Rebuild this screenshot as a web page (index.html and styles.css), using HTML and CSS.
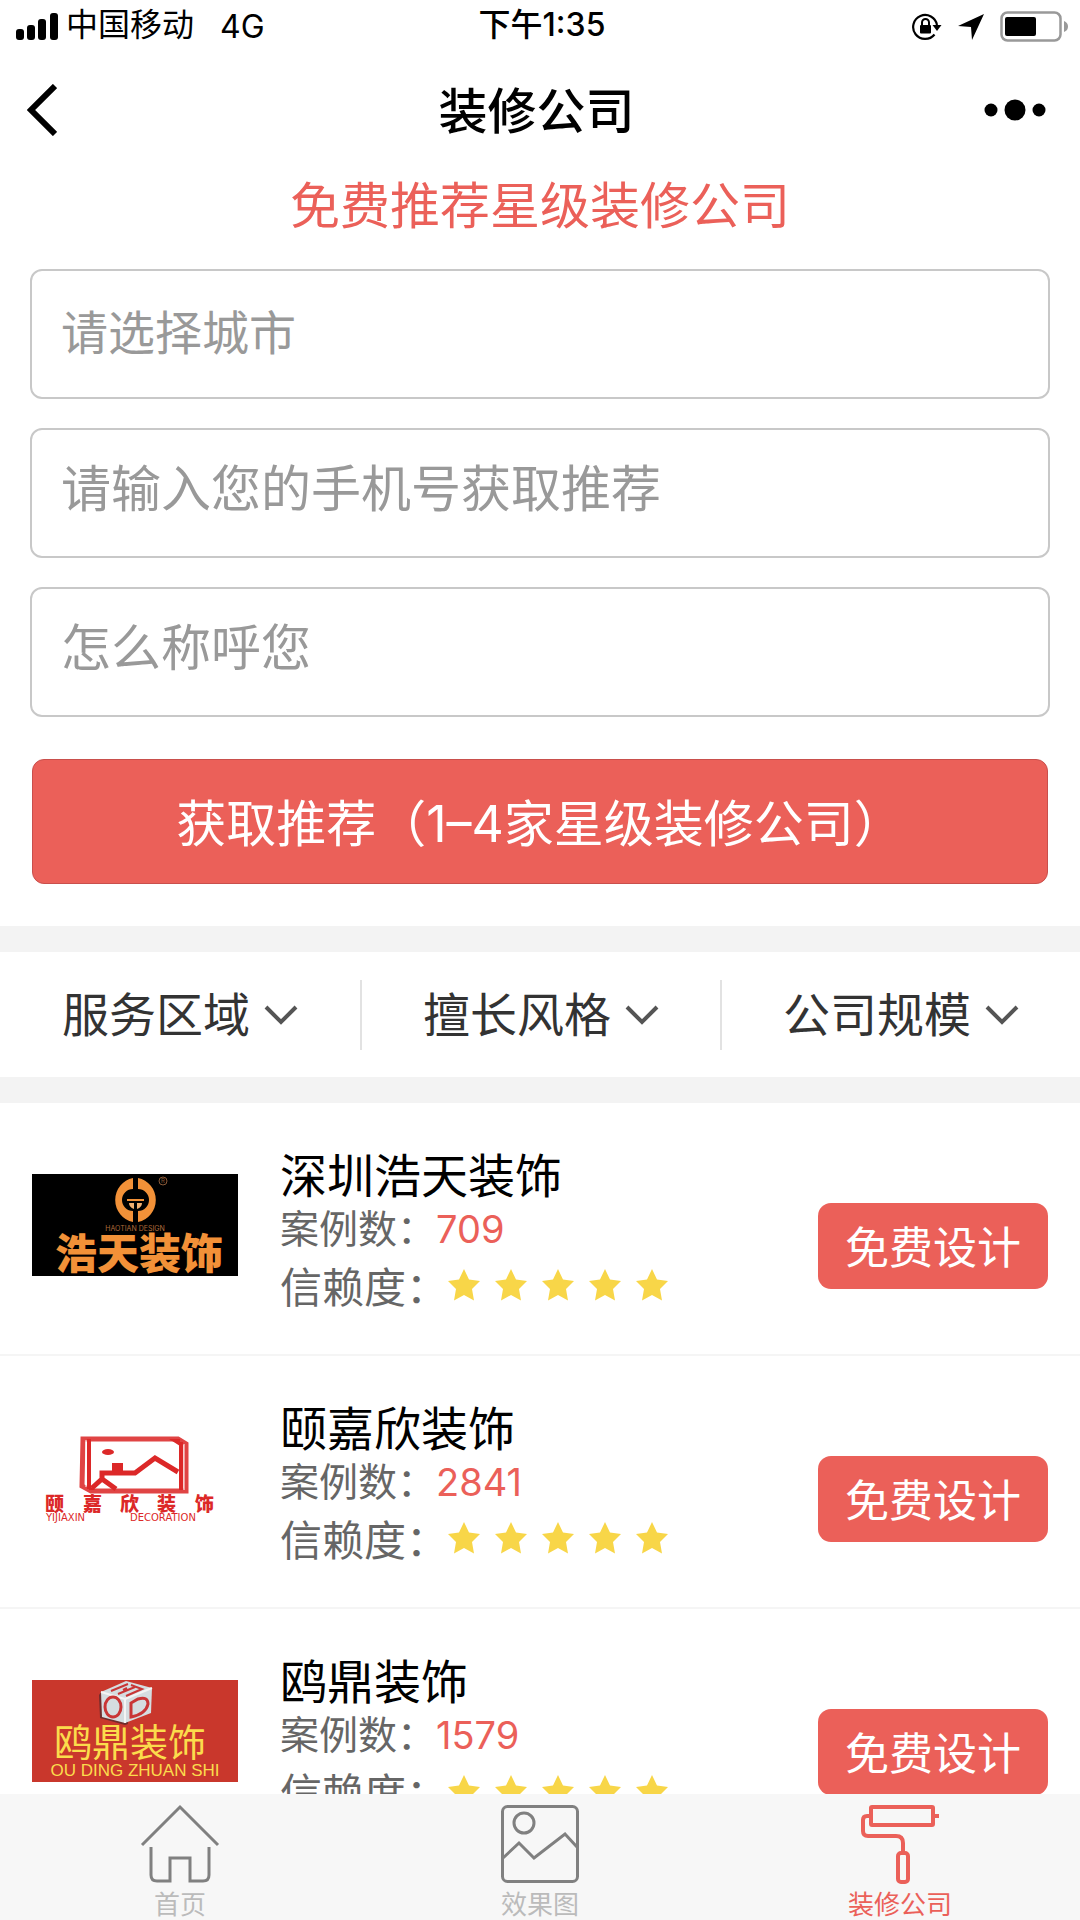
FILE: index.html
```html
<!DOCTYPE html>
<html lang="zh-CN">
<head>
<meta charset="utf-8">
<meta name="viewport" content="width=device-width">
<title>装修公司</title>
<link rel="stylesheet" href="styles.css">
</head>
<body>
<svg width="0" height="0" class="sprite" aria-hidden="true">
  <symbol id="star" viewBox="0 0 32 32"><path d="M16 0l5 10.500 11 1.500-8 8 2 11.500L16 26l-10 5.500L8 20 0 12l11-1.500z" fill="#f8d648"/></symbol>
  <symbol id="stars" viewBox="0 0 220 32">
    <use href="#star" x="0" width="32" height="32"/><use href="#star" x="47" width="32" height="32"/><use href="#star" x="94" width="32" height="32"/><use href="#star" x="141" width="32" height="32"/><use href="#star" x="188" width="32" height="32"/>
  </symbol>
  <symbol id="down" viewBox="0 0 34 20"><path d="M2 2l15 15L32 2" fill="none" stroke="#555" stroke-width="4"/></symbol>
</svg>

<div class="app">
  <div class="status">
    <div class="status-left">
      <svg width="42" height="28" viewBox="0 0 42 28" aria-hidden="true"><rect x="0" y="16" width="8" height="11" rx="3"/><rect x="11" y="12" width="8" height="15" rx="3"/><rect x="22" y="6" width="8" height="21" rx="3"/><rect x="34" y="0" width="8" height="27" rx="3"/></svg>
      <span class="carrier">中国移动</span>
      <span class="network">4G</span>
    </div>
    <time class="clock">下午1:35</time>
    <div class="status-right">
      <svg width="30" height="28" viewBox="0 0 30 28" aria-hidden="true"><path d="M22.500 21.500A12 12 0 1 1 25 12" fill="none" stroke="#000" stroke-width="2.200"/><path d="M20.500 12h9l-4.500 6z"/><rect x="8" y="12" width="11" height="8.500" rx="1"/><path d="M10 12V9.500a3.500 3.500 0 0 1 7 0V12" fill="none" stroke="#000" stroke-width="2"/></svg>
      <svg width="26" height="26" viewBox="0 0 26 26" aria-hidden="true"><path d="M26 0L14 26 13 13 0 12z"/></svg>
      <svg width="68" height="32" viewBox="0 0 68 32" aria-hidden="true"><rect x="1.500" y="1.500" width="59" height="28" rx="6" fill="none" stroke="#999" stroke-width="2.500"/><rect x="5" y="6" width="31" height="19" rx="2"/><path d="M64 10q4 1.500 4 5.500t-4 5.500z" fill="#999"/></svg>
    </div>
  </div>

  <header class="nav">
    <button class="icon-btn" type="button" aria-label="返回"><svg width="30" height="52" viewBox="0 0 30 52" aria-hidden="true"><path d="M28 2L4 26l24 24" fill="none" stroke="#000" stroke-width="6"/></svg></button>
    <h1 class="nav-title">装修公司</h1>
    <button class="icon-btn more" type="button" aria-label="更多"><svg width="62" height="22" viewBox="0 0 62 22" aria-hidden="true"><circle cx="7" cy="11" r="6.500"/><circle cx="31" cy="11" r="10.500"/><circle cx="55" cy="11" r="6.500"/></svg></button>
  </header>

  <main class="content">
    <form class="quote">
      <h2 class="quote-title">免费推荐星级装修公司</h2>
      <select class="field field-city" aria-label="城市"><option>请选择城市</option></select>
      <input class="field" type="tel" aria-label="手机号" placeholder="请输入您的手机号获取推荐">
      <input class="field" type="text" aria-label="称呼" placeholder="怎么称呼您">
      <button class="submit" type="button">获取推荐（1–4家星级装修公司）</button>
    </form>

    <div class="filters">
      <button class="filter" type="button"><span>服务区域</span><svg width="34" height="20" aria-hidden="true"><use href="#down"/></svg></button>
      <button class="filter" type="button"><span>擅长风格</span><svg width="34" height="20" aria-hidden="true"><use href="#down"/></svg></button>
      <button class="filter" type="button"><span>公司规模</span><svg width="34" height="20" aria-hidden="true"><use href="#down"/></svg></button>
    </div>

    <ul class="companies">
      <li class="company">
        <svg class="logo" viewBox="0 0 206 102" role="img" aria-label="浩天装饰">
          <rect width="206" height="102"/>
          <path d="M101 4a22.500 22.500 0 0 0 0 44V37a11 11 0 0 1 0-22zM106 4a22.500 22.500 0 0 1 0 44V37a11 11 0 0 0 0-22z" fill="#f29138"/>
          <path d="M95 26h17" stroke="#f29138" stroke-width="2"/><path d="M97 29h5v6q-5-2-5-6zM105 29h5q0 4-5 6z" fill="#f2b070"/>
          <circle cx="131" cy="7" r="4" fill="none" stroke="#8a5a38"/><text class="logo-mark" x="131" y="9">R</text>
          <text class="logo-ht-sub" x="103" y="57">HAOTIAN DESIGN</text>
          <text class="logo-ht" x="107" y="95">浩天装饰</text>
        </svg>
        <div class="info">
          <h3 class="name">深圳浩天装饰</h3>
          <p class="cases">案例数：<span class="num">709</span></p>
          <p class="trust">信赖度：<svg class="stars" width="220" height="32" role="img" aria-label="5星"><use href="#stars"/></svg></p>
        </div>
        <button class="design" type="button">免费设计</button>
      </li>
      <li class="company">
        <svg class="logo" viewBox="0 0 206 102" role="img" aria-label="颐嘉欣装饰">
          <g fill="none" stroke="#dc2828">
            <path d="M51 12h95l8 5v47H59l-9-5z" stroke="#e04444" stroke-width="5"/>
            <path d="M57 12v50M149 15v48" stroke-width="4"/>
            <path d="M54 13v47M152 17v46" stroke="#fff" stroke-width="1"/>
            <path d="M60 61l10-9 14 10M70 54V46h33l20-15 23 14" stroke-width="5"/>
          </g>
          <ellipse cx="76" cy="25" rx="6" ry="3" fill="#dc2828"/><rect x="80" y="36" width="11" height="9" fill="#dc2828"/><path d="M137 12l11 7v-7zM57 58l6 5h-6z" fill="#dc2828"/>
          <text class="logo-yj" x="13 51 88 125 163" y="84">颐嘉欣装饰</text>
          <text class="logo-yj-sub" x="14" y="94">YIJIAXIN</text><text class="logo-yj-sub" x="98" y="94">DECORATION</text>
        </svg>
        <div class="info">
          <h3 class="name">颐嘉欣装饰</h3>
          <p class="cases">案例数：<span class="num">2841</span></p>
          <p class="trust">信赖度：<svg class="stars" width="220" height="32" role="img" aria-label="5星"><use href="#stars"/></svg></p>
        </div>
        <button class="design" type="button">免费设计</button>
      </li>
      <li class="company">
        <svg class="logo" viewBox="0 0 206 102" role="img" aria-label="鸥鼎装饰">
          <rect width="206" height="102" fill="#c9372c"/>
          <path d="M67 15l2-3 27 9v23l-3 1-25-7z" fill="#712c2c"/>
          <path d="M69 12l25-11 26 7-1 25-26 10-23-6z" fill="#d5dde0"/>
          <path d="M69 12l24 7v24M93 19l27-11" fill="none" stroke="#f4f4f4" stroke-width="2"/>
          <g fill="none" stroke="#c93636" stroke-width="3"><ellipse cx="81" cy="27" rx="8" ry="10"/><path d="M99 23v14q15-3 17-13 0-8-10-5z"/><path d="M79 11l17-7M86 14l17-7M91 10l4-2M94 16l16-7-11-4" stroke-width="2"/></g>
          <text class="logo-od" x="98" y="76">鸥鼎装饰</text>
          <text class="logo-od-sub" x="103" y="96">OU DING ZHUAN SHI</text>
        </svg>
        <div class="info">
          <h3 class="name">鸥鼎装饰</h3>
          <p class="cases">案例数：<span class="num">1579</span></p>
          <p class="trust">信赖度：<svg class="stars" width="220" height="32" role="img" aria-label="5星"><use href="#stars"/></svg></p>
        </div>
        <button class="design" type="button">免费设计</button>
      </li>
    </ul>
  </main>

  <nav class="tabs">
    <a class="tab" href="#home">
      <svg width="80" height="80" viewBox="0 0 80 80" aria-hidden="true"><path d="M2 41L40 3l38 38M11 43v28q0 6 6 6h13V54h20v23h13q6 0 6-6V43" fill="none" stroke="#808080" stroke-width="3"/></svg>
      首页
    </a>
    <a class="tab" href="#gallery">
      <svg width="80" height="80" viewBox="0 0 80 80" aria-hidden="true"><g fill="none" stroke="#808080" stroke-width="3"><rect x="2.500" y="2.500" width="75" height="75" rx="5"/><circle cx="24" cy="19" r="10"/><path d="M3 54l16-15 15 15 31-24 12 13"/></g></svg>
      效果图
    </a>
    <a class="tab tab-active" href="#companies" aria-current="page">
      <svg width="80" height="80" viewBox="0 0 80 80" aria-hidden="true"><g fill="none" stroke="#eb6059" stroke-width="4"><rect x="11" y="3" width="62" height="18" rx="1"/><path d="M73 12h6M11 12H7q-4 0-4 4v11q0 5 5 5h28q7 0 7 7v10"/><rect x="38" y="49" width="10" height="29" rx="3"/></g></svg>
      装修公司
    </a>
  </nav>
</div>
</body>
</html>
```
FILE: styles.css
```css
* { box-sizing: border-box; }

body {
  margin: 0;
  background: #fff;
  color: #000;
  font-family: Inter, "Noto Sans CJK SC", sans-serif;
}

h1, h2, h3, p, ul { margin: 0; padding: 0; font-weight: 400; }
ul { list-style: none; }
button, input, select { font: inherit; color: inherit; }
button { padding: 0; border: 0; background: none; }
svg { flex: none; }
.sprite { position: absolute; }

.app { display: flex; flex-direction: column; height: 100vh; }

/* Status bar */
.status {
  display: grid;
  grid-template-columns: 1fr auto 1fr;
  align-items: center;
  height: 54px;
  padding: 0 12px 0 16px;
  font-size: 32px;
  line-height: 50px;
}
.status-left, .status-right { display: flex; align-items: center; }
.status-left { gap: 8px; }
.carrier { margin-right: 18px; padding-bottom: 4px; }
.clock { padding-bottom: 4px; font-weight: 500; }
.status-right { justify-content: flex-end; gap: 16px; }

/* Title bar */
.nav {
  display: grid;
  grid-template-columns: 1fr auto 1fr;
  align-items: center;
  height: 112px;
  padding: 0 34px 0 27px;
}
.icon-btn { display: flex; justify-self: start; }
.more { justify-self: end; }
.nav-title { padding-bottom: 6px; font-size: 49px; font-weight: 500; }

.content { flex: 1; min-height: 0; overflow-y: auto; scrollbar-width: none; }

/* Quote form */
.quote {
  display: flex;
  flex-direction: column;
  gap: 29px;
  padding: 6px 30px 42px;
}
.quote-title {
  font-size: 50px;
  line-height: 68px;
  text-align: center;
  color: #eb6059;
}
.field {
  width: 100%;
  height: 130px;
  padding: 0 29px 8px;
  border: 2px solid #c8c8c8;
  border-radius: 12px;
  background: #fff;
  font-size: 50px;
  color: #999;
  appearance: none;
  outline: 0;
}
.field::placeholder { color: #999; opacity: 1; }
.field-city { padding-bottom: 4px; font-size: 47px; }
.submit {
  height: 125px;
  margin: 13px 2px 0;
  padding-bottom: 4px;
  border: 1px solid #c94f4c;
  border-radius: 12px;
  background: #eb6059;
  color: #fff;
  font-size: 50px;
}

/* Filters */
.filters {
  display: grid;
  grid-template-columns: repeat(3, 1fr);
  align-items: center;
  height: 177px;
  border: solid #f3f3f3;
  border-width: 26px 0;
}
.filter {
  display: flex;
  align-items: center;
  justify-content: center;
  gap: 14px;
  height: 70px;
  font-size: 47px;
  color: #333;
}
.filter span { padding-bottom: 6px; }
.filter + .filter { border-left: 2px solid #e2e2e2; }

/* Company list */
.company {
  display: grid;
  grid-template-columns: auto 1fr auto;
  align-items: start;
  column-gap: 42px;
  padding: 44px 32px 32px;
  border-bottom: 2px solid #f5f5f5;
}
.logo { width: 206px; height: 102px; margin-top: 27px; overflow: visible; }
.name { font-size: 47px; line-height: 57px; }
.cases { font-size: 39px; line-height: 50px; color: #666; }
.num { font-size: 38px; color: #eb6059; }
.trust {
  display: flex;
  align-items: center;
  font-size: 42px;
  line-height: 68px;
  color: #666;
}
.stars { margin-bottom: 6px; }
.design {
  width: 230px;
  height: 86px;
  margin-top: 56px;
  padding-bottom: 2px;
  border-radius: 13px;
  background: #eb6059;
  color: #fff;
  font-size: 44px;
}

/* Logo lettering */
.logo text { text-anchor: middle; }
.logo .logo-mark { font-size: 6px; fill: #8a5a38; }
.logo .logo-ht { font-size: 42px; font-weight: 900; fill: #f29138; }
.logo .logo-ht-sub { font-size: 7px; fill: #b06a3a; }
.logo .logo-yj { font-size: 19px; font-weight: 900; fill: #dc2828; text-anchor: start; }
.logo .logo-yj-sub { font: 10px "DejaVu Sans", sans-serif; fill: #dc2828; text-anchor: start; }
.logo .logo-od { font-size: 38px; fill: #fbdc4c; }
.logo .logo-od-sub { font: 17px "Liberation Sans", sans-serif; fill: #fbdc4c; }

/* Tab bar */
.tabs {
  display: grid;
  grid-template-columns: repeat(3, 1fr);
  height: 126px;
  padding-top: 10px;
  background: #f7f7f7;
}
.tab {
  display: flex;
  flex-direction: column;
  align-items: center;
  gap: 4px;
  font-size: 26px;
  line-height: 34px;
  color: #bbb;
  text-decoration: none;
}
.tab-active { color: #eb6059; }
```
